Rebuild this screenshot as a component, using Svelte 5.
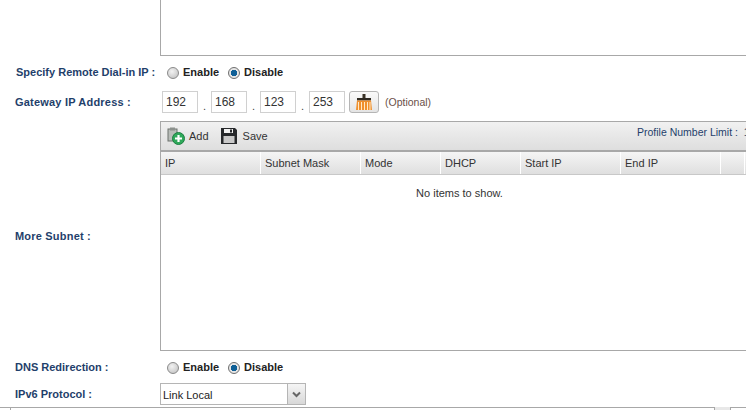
<script>
	const columns = [
		{ name: 'IP', width: 100 },
		{ name: 'Subnet Mask', width: 100 },
		{ name: 'Mode', width: 80 },
		{ name: 'DHCP', width: 80 },
		{ name: 'Start IP', width: 100 },
		{ name: 'End IP', width: 100 },
		{ name: '', width: 24 },
		{ name: '', width: 40 }
	];
	const octets = ['192', '168', '123', '253'];
</script>

{#snippet toggle()}
	<span class="radio"></span>
	<span class="radio-label">Enable</span>
	<span class="radio checked"></span>
	<span class="radio-label">Disable</span>
{/snippet}

<div class="page">
	<div class="top-row">
		<div class="top-box"></div>
	</div>

	<div class="row dial-row">
		<div class="label dial-label">Specify Remote Dial-in IP :</div>
		<div class="field toggle">{@render toggle()}</div>
	</div>

	<div class="row gateway-row">
		<div class="label wide">Gateway IP Address :</div>
		<div class="field ip">
			{#each octets as octet, i}
				<span class="octet">{octet}</span>
				{#if i < 3}<span class="dot">.</span>{/if}
			{/each}
			<button class="broom" type="button" aria-label="Clear">
				<svg width="16" height="16" viewBox="0 0 16 16">
					<rect x="6.5" y="0" width="3" height="4" fill="#3a3226" />
					<rect x="1" y="4" width="14" height="2.5" fill="#2f2a22" />
					<path d="M1 6.5h14l1 9.5H0z" fill="#f0902c" />
					<path d="M2.5 8v8M5.5 8v8M8.5 8v8M11.5 8v8M14 8v8" stroke="#ffe9c8" stroke-width="1" />
				</svg>
			</button>
			<span class="optional">(Optional)</span>
		</div>
	</div>

	<div class="row subnet-row">
		<div class="label wide subnet-label">More Subnet :</div>
		<div class="panel">
			<div class="toolbar">
				<span class="tool add">
					<svg width="18" height="18" viewBox="0 0 18 18">
						<rect x="1" y="2" width="9" height="12" fill="#b9bdb9" stroke="#6d726e" />
						<rect x="3" y="0.5" width="5" height="3" fill="#8b908c" />
						<circle cx="11.5" cy="11.5" r="6" fill="#2fa85a" stroke="#1b7f40" />
						<path d="M11.5 8v7M8 11.5h7" stroke="#fff" stroke-width="2.2" />
					</svg>
					Add
				</span>
				<span class="tool save">
					<svg width="16" height="16" viewBox="0 0 16 16">
						<path d="M0 0h14l2 2v14H0z" fill="#26282b" />
						<rect x="3" y="1" width="9" height="4" fill="#f2f2f2" />
						<rect x="9" y="1.5" width="2" height="3" fill="#26282b" />
						<rect x="2.5" y="8" width="11" height="7" fill="#c9c9c9" />
					</svg>
					Save
				</span>
				<span class="limit">Profile Number Limit :&nbsp; 16</span>
			</div>
			<div class="head">
				{#each columns as col}
					<div class="cell" style="width: {col.width}px">{col.name}</div>
				{/each}
			</div>
			<div class="empty">No items to show.</div>
		</div>
	</div>

	<div class="row dns-row">
		<div class="label">DNS Redirection :</div>
		<div class="field toggle">{@render toggle()}</div>
	</div>

	<div class="row ipv6-row">
		<div class="label">IPv6 Protocol :</div>
		<div class="select">
			<span class="select-value">Link Local</span>
			<span class="select-arrow">
				<svg width="9" height="7" viewBox="0 0 9 7">
					<path d="M1 1.5l3.5 3.5L8 1.5" fill="none" stroke="#666" stroke-width="2" />
				</svg>
			</span>
		</div>
	</div>

	<div class="bottom-bar">
		<span class="line short"></span>
		<span class="line grow"></span>
		<span class="tab active"></span>
		<span class="line tab"></span>
	</div>
</div>

<style>
	:global(body) {
		margin: 0;
		background: #fff;
	}

	.page {
		width: 746px;
		height: 410px;
		overflow: hidden;
		font-family: 'Liberation Sans', Arial, sans-serif;
		font-size: 11px;
		color: #222;
	}

	.top-row {
		padding-left: 160px;
	}

	.top-box {
		height: 55px;
		border: 1px solid #a8a8a8;
		border-top: none;
		border-right: none;
	}

	.row {
		display: flex;
		align-items: center;
	}

	.label {
		width: 145px;
		padding-left: 15px;
		flex: none;
		font-weight: bold;
		color: #1f3f6b;
		white-space: nowrap;
	}

	.label.wide {
		letter-spacing: 0.2px;
	}

	.dial-label {
		padding-left: 16px;
		width: 144px;
	}

	.dial-row {
		height: 20px;
		margin-top: 6px;
	}

	.gateway-row {
		height: 24px;
		margin-top: 8px;
	}

	.subnet-row {
		margin-top: 7px;
		align-items: stretch;
	}

	.subnet-label {
		align-self: center;
	}

	.dns-row {
		height: 20px;
		margin-top: 6px;
	}

	.ipv6-row {
		height: 22px;
		margin-top: 6px;
	}

	.toggle {
		display: flex;
		align-items: center;
		padding-left: 7px;
	}

	.radio {
		box-sizing: border-box;
		width: 12px;
		height: 12px;
		border-radius: 50%;
		border: 1px solid #8a8a8a;
		background: radial-gradient(circle at 40% 35%, #f2f2f2, #bdbdbd);
		flex: none;
		margin-top: 2px;
	}

	.radio.checked {
		background: radial-gradient(circle, #0f5f96 0 3px, #e6e6e6 3.5px);
		border-color: #6f6f6f;
	}

	.radio-label {
		font-weight: bold;
		color: #222;
		margin-left: 4px;
		margin-right: 9px;
	}

	.ip {
		display: flex;
		align-items: center;
		padding-left: 2px;
	}

	.octet {
		box-sizing: border-box;
		width: 36px;
		height: 22px;
		line-height: 20px;
		padding-left: 3px;
		border: 1px solid #d0d0d0;
		font-size: 12px;
		color: #333;
	}

	.dot {
		width: 13px;
		text-align: center;
		align-self: flex-end;
		line-height: 14px;
		color: #444;
	}

	.broom {
		box-sizing: border-box;
		width: 30px;
		height: 22px;
		margin: 0 0 0 4px;
		padding: 0;
		border: 1px solid #b5b5b5;
		border-radius: 3px;
		background: linear-gradient(#fafafa, #e4e4e4);
		display: flex;
		align-items: center;
		justify-content: center;
	}

	.optional {
		margin-left: 6px;
		color: #6b4f48;
		font-size: 10.5px;
	}

	.panel {
		flex: none;
		width: 780px;
		height: 228px;
		border: 1px solid #a8a8a8;
		border-right: none;
	}

	.toolbar {
		height: 28px;
		display: flex;
		align-items: center;
		padding-left: 6px;
		background: linear-gradient(#f1f1f1, #dedede);
		border-bottom: 2px solid #a8a8a8;
		position: relative;
	}

	.tool {
		display: flex;
		align-items: center;
		gap: 4px;
		color: #333;
		margin-right: 12px;
	}

	.tool.save {
		gap: 6px;
	}

	.limit {
		position: absolute;
		left: 476px;
		top: 4px;
		font-size: 10.5px;
		color: #1f3f6b;
		white-space: nowrap;
	}

	.head {
		display: flex;
		height: 22px;
		background: linear-gradient(#f5f5f5, #dfdfdf);
		border-bottom: 1px solid #c8c8c8;
	}

	.cell {
		box-sizing: border-box;
		flex: none;
		padding-left: 4px;
		line-height: 22px;
		border-right: 1px solid #fff;
		color: #333;
		white-space: nowrap;
	}

	.empty {
		text-align: center;
		width: 597px;
		padding-top: 12px;
		color: #333;
	}

	.select {
		box-sizing: border-box;
		width: 146px;
		height: 22px;
		display: flex;
		border: 1px solid #b5b5b5;
		background: #fff;
	}

	.select-value {
		flex: 1;
		line-height: 22px;
		padding-left: 2px;
		color: #222;
	}

	.select-arrow {
		width: 17px;
		border-left: 1px solid #b5b5b5;
		background: linear-gradient(#f5f5f5, #d8d8d8);
		display: flex;
		align-items: center;
		justify-content: center;
	}

	.bottom-bar {
		display: flex;
		height: 3px;
		margin-top: 2px;
	}

	.line {
		border-top: 1px solid #a8a8a8;
	}

	.short {
		width: 10px;
		border-right: 1px solid #a8a8a8;
	}

	.grow {
		flex: 1;
	}

	.tab {
		width: 15px;
		border-left: 1px solid #a8a8a8;
	}

	.tab.active {
		background: #e8e8e8;
	}
</style>
